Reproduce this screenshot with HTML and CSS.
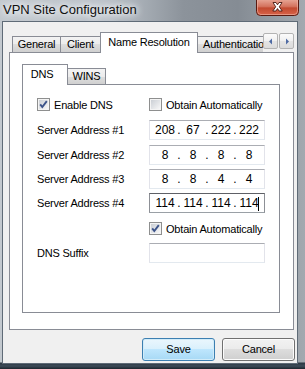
FILE: index.html
```html
<!DOCTYPE html>
<html>
<head>
<meta charset="utf-8">
<link rel="stylesheet" href="styles.css">
</head>
<body>
<div class="window">
  <div class="titlebar">
    <span class="title">VPN Site Configuration</span>
    <div class="close">
      <svg width="43" height="17" viewBox="0 0 43 17">
        <defs>
          <linearGradient id="cg" x1="0" y1="0" x2="0" y2="1">
            <stop offset="0" stop-color="#e9a999"/>
            <stop offset="0.45" stop-color="#d4735e"/>
            <stop offset="0.55" stop-color="#c24a30"/>
            <stop offset="1" stop-color="#d9644a"/>
          </linearGradient>
        </defs>
        <path d="M0.5 0 V12.5 Q0.5 16.5 4.5 16.5 H38.5 Q42.5 16.5 42.5 12.5 V0" fill="url(#cg)" stroke="#5a1a10"/>
        <path d="M1.5 0 V12 Q1.5 15.5 5 15.5 H38 Q41.5 15.5 41.5 12 V0" fill="none" stroke="#f0b8a8" stroke-opacity="0.6"/>
        <path d="M17 3.5 L20 3.5 L21.5 5.8 L23 3.5 L26 3.5 L23.3 7.8 L26.2 12 L23.1 12 L21.5 9.6 L19.9 12 L16.8 12 L19.7 7.8 Z" fill="#fff" stroke="#4a1a12" stroke-width="0.9" stroke-linejoin="round"/>
      </svg>
    </div>
  </div>
  <div class="client">
    <div class="tabctl outer">
      <div class="tabstrip">
        <div class="tabclip">
          <div class="tab t-general">General</div>
          <div class="tab t-client">Client</div>
          <div class="tab active t-name">Name Resolution</div>
          <div class="tab t-auth">Authentication</div>
        </div>
        <div class="spin">
          <div class="spinbtn">
            <svg width="14" height="15" viewBox="0 0 14 15"><path d="M8 4.5 L5 7.5 L8 10.5 Z" fill="#4e6aa3"/></svg>
          </div>
          <div class="spinbtn">
            <svg width="14" height="15" viewBox="0 0 14 15"><path d="M6 4.5 L9 7.5 L6 10.5 Z" fill="#4e6aa3"/></svg>
          </div>
        </div>
      </div>
      <div class="tabpage outerpage">
        <div class="tabctl inner">
          <div class="tabstrip small">
            <div class="tab active t-dns">DNS</div>
            <div class="tab t-wins">WINS</div>
          </div>
          <div class="tabpage innerpage">
            <div class="row checkrow first">
              <div class="labelcol">
                <span class="check">
                  <svg width="13" height="13" viewBox="0 0 13 13">
                    <rect x="0.5" y="0.5" width="12" height="12" fill="#f4f4f4" stroke="#8e8f8f"/>
                    <rect x="2" y="2" width="9" height="9" fill="url(#chk)"/>
                    <path d="M3.2 6.4 L5.3 9 L9.8 3.2" fill="none" stroke="#3c5389" stroke-width="1.9"/>
                  </svg>
                </span>
                <span>Enable DNS</span>
              </div>
              <div class="fieldcol">
                <span class="check">
                  <svg width="13" height="13" viewBox="0 0 13 13">
                    <rect x="0.5" y="0.5" width="12" height="12" fill="#f4f4f4" stroke="#8e8f8f"/>
                    <rect x="2" y="2" width="9" height="9" fill="url(#chk)"/>
                  </svg>
                </span>
                <span>Obtain Automatically</span>
              </div>
            </div>
            <div class="row fieldrow f1">
              <div class="labelcol">Server Address #1</div>
              <div class="ipfield"><span class="oct">208</span><span class="dot">.</span><span class="oct">67</span><span class="dot">.</span><span class="oct">222</span><span class="dot">.</span><span class="oct">222</span></div>
            </div>
            <div class="row fieldrow">
              <div class="labelcol">Server Address #2</div>
              <div class="ipfield"><span class="oct">8</span><span class="dot">.</span><span class="oct">8</span><span class="dot">.</span><span class="oct">8</span><span class="dot">.</span><span class="oct">8</span></div>
            </div>
            <div class="row fieldrow">
              <div class="labelcol">Server Address #3</div>
              <div class="ipfield"><span class="oct">8</span><span class="dot">.</span><span class="oct">8</span><span class="dot">.</span><span class="oct">4</span><span class="dot">.</span><span class="oct">4</span></div>
            </div>
            <div class="row fieldrow f4">
              <div class="labelcol">Server Address #4</div>
              <div class="ipfield focused"><span class="oct">114</span><span class="dot">.</span><span class="oct">114</span><span class="dot">.</span><span class="oct">114</span><span class="dot">.</span><span class="oct caret">114</span></div>
            </div>
            <div class="row checkrow second">
              <div class="labelcol"></div>
              <div class="fieldcol">
                <span class="check">
                  <svg width="13" height="13" viewBox="0 0 13 13">
                    <rect x="0.5" y="0.5" width="12" height="12" fill="#f4f4f4" stroke="#8e8f8f"/>
                    <rect x="2" y="2" width="9" height="9" fill="url(#chk)"/>
                    <path d="M3.2 6.4 L5.3 9 L9.8 3.2" fill="none" stroke="#3c5389" stroke-width="1.9"/>
                  </svg>
                </span>
                <span>Obtain Automatically</span>
              </div>
            </div>
            <div class="row fieldrow suffix">
              <div class="labelcol">DNS Suffix</div>
              <div class="textfield"></div>
            </div>
          </div>
        </div>
      </div>
    </div>
    <div class="buttons">
      <div class="btn default">Save</div>
      <div class="btn">Cancel</div>
    </div>
  </div>
</div>
<svg width="0" height="0" class="defs">
  <defs>
    <linearGradient id="chk" x1="0" y1="0" x2="1" y2="1">
      <stop offset="0" stop-color="#cbcfd5"/>
      <stop offset="1" stop-color="#f7f7f7"/>
    </linearGradient>
  </defs>
</svg>
</body>
</html>
```
FILE: styles.css
```css
html, body {
  margin: 0;
  padding: 0;
}
body {
  width: 305px;
  height: 369px;
  overflow: hidden;
  font-family: "Liberation Sans", Arial, sans-serif;
  font-size: 11px;
  letter-spacing: -0.2px;
  color: #000;
  background:
    linear-gradient(180deg, rgba(0,0,0,0) 0, rgba(0,0,0,0) 362px, #2b3742 363px, #3d4b58 366px, #1c252e 369px),
    linear-gradient(90deg, #c3c9cf 0, #bcc3ca 35%, #8c939b 60%, #858c94 78%, #a2a9b0 100%);
}
.defs {
  position: absolute;
}
.window {
  display: flex;
  flex-direction: column;
  height: 369px;
}
.titlebar {
  height: 22px;
  display: flex;
  align-items: flex-start;
}
.title {
  font-family: "Liberation Sans", sans-serif;
  font-size: 13px;
  letter-spacing: 0;
  line-height: 16px;
  margin: 2px 0 0 3px;
  color: #101010;
  text-shadow: 0 0 5px #f4f6f8, 0 0 8px #eef1f4, 0 0 10px #e8ecf0;
}
.close {
  margin-left: auto;
  margin-right: 6px;
  height: 17px;
  margin-top: -1px;
}
.close svg {
  display: block;
}
.client {
  margin: 0 8px 0 3px;
  height: 341px;
  background: #f0f0f0;
  display: flex;
  flex-direction: column;
  box-shadow: 0 0 0 1px #5f6b77;
}
.tabctl.outer {
  margin: 10px 0 0 6px;
  width: 285px;
}
.tabstrip {
  height: 21px;
  display: flex;
  align-items: flex-end;
  margin-bottom: -1px;
  position: relative;
  z-index: 1;
}
.tabclip {
  flex: 1;
  height: 21px;
  display: flex;
  align-items: flex-end;
  overflow: hidden;
  padding-left: 3px;
}
.tab {
  flex: none;
  box-sizing: border-box;
  height: 16px;
  margin-bottom: 1px;
  border: 1px solid #898c95;
  border-bottom: none;
  background: linear-gradient(180deg, #f3f3f3 0, #ececec 50%, #dedede 50%, #d0d0d0 100%);
  text-align: center;
  line-height: 15px;
  white-space: nowrap;
  margin-left: -1px;
}
.tab.active {
  height: 21px;
  margin-bottom: 0;
  background: #fff;
  padding-top: 2px;
  position: relative;
  z-index: 2;
}
.t-general { width: 49px; margin-left: 0; }
.t-client { width: 41px; }
.t-name { width: 98px; }
.t-auth { width: 80px; text-align: left; padding-left: 5px; }
.spin {
  flex: none;
  align-self: flex-start;
  margin-top: 1px;
  display: flex;
  gap: 1px;
}
.spinbtn {
  box-sizing: border-box;
  width: 15px;
  height: 16px;
  border: 1px solid #b3b3b3;
  border-radius: 2px;
  background: linear-gradient(180deg, #fbfbfb 0, #f0f0f0 50%, #e4e4e4 50%, #dcdcdc 100%);
}
.spinbtn svg {
  display: block;
}
.tabpage {
  box-sizing: border-box;
  border: 1px solid #898c95;
  background: #fff;
}
.outerpage {
  height: 278px;
  padding: 11px 13px 0 12px;
}
.tabstrip.small .tab.active {
  padding-top: 2px;
  padding-right: 6px;
  margin-left: 0;
}
.t-dns { width: 46px; }
.t-wins { width: 39px; }
.innerpage {
  height: 229px;
  padding: 13px 0 0 14px;
}
.row {
  display: flex;
  align-items: center;
}
.checkrow {
  height: 13px;
}
.checkrow.first {
  margin-bottom: 9px;
}
.fieldrow {
  height: 20px;
  margin-bottom: 4px;
}
.fieldrow.f1 {
  margin-bottom: 5px;
}
.fieldrow.f4 {
  margin-bottom: 9px;
}
.checkrow.second {
  margin-bottom: 8px;
}
.labelcol {
  width: 112px;
  flex: none;
  display: flex;
  align-items: center;
  white-space: nowrap;
}
.fieldcol {
  display: flex;
  align-items: center;
  white-space: nowrap;
}
.check {
  width: 13px;
  height: 13px;
  margin-right: 4px;
  flex: none;
}
.check svg {
  display: block;
}
.ipfield, .textfield {
  box-sizing: border-box;
  width: 116px;
  height: 20px;
  border: 1px solid;
  border-color: #abadb3 #e2e3ea #e3e9ef #e2e3ea;
  background: #fff;
}
.ipfield {
  display: flex;
  align-items: center;
  padding-left: 4px;
  font-size: 12px;
  letter-spacing: 0;
}
.ipfield.focused {
  border-color: #5e6066 #8d9096 #9aa0a6 #8d9096;
}
.oct {
  width: 22px;
  text-align: center;
}
.dot {
  width: 6px;
  text-align: center;
}
.caret {
  position: relative;
}
.caret::after {
  content: "";
  position: absolute;
  right: 1px;
  top: 1px;
  width: 1px;
  height: 14px;
  background: #000;
}
.buttons {
  display: flex;
  gap: 7px;
  margin: 8px 0 0 139px;
}
.btn {
  box-sizing: border-box;
  width: 73px;
  height: 23px;
  border: 1px solid #707070;
  border-radius: 3px;
  background: linear-gradient(180deg, #f2f2f2 0, #ebebeb 50%, #dddddd 50%, #cfcfcf 100%);
  box-shadow: inset 0 0 0 1px #fcfcfc;
  text-align: center;
  line-height: 20px;
}
.btn.default {
  border-color: #3c7fb1;
  background: linear-gradient(180deg, #eaf6fd 0, #d9f0fc 50%, #bee6fd 50%, #a7d9f5 100%);
  box-shadow: inset 0 0 0 1px #d2ecf9;
}
```
